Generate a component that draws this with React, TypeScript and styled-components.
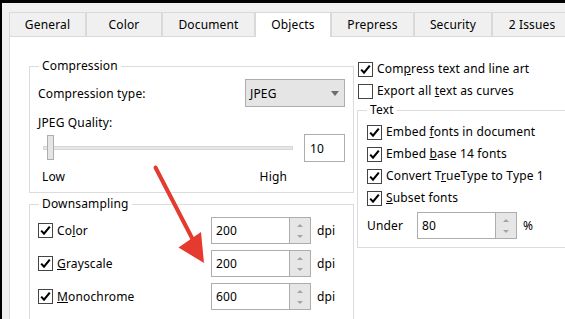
import React from "react";
import styled, { createGlobalStyle } from "styled-components";

const Global = createGlobalStyle`
  html, body { margin: 0; padding: 0; background: #000; }
  body {
    width: 565px; height: 319px; overflow: hidden;
    font-family: "Noto Sans", "Segoe UI", sans-serif;
    font-size: 12px; color: #000;
    letter-spacing: 0.15px;
  }
`;

const Page = styled.div`
  position: relative;
  width: 565px;
  height: 319px;
  overflow: hidden;
  box-sizing: border-box;
  padding: 3px 0 0 2px;
  background: #000;
`;

const Window = styled.div`
  display: flex;
  flex-direction: column;
  height: 316px;
  box-sizing: border-box;
  padding: 9px 0 0 7px;
  background: #f0f0f0;
`;

const TabBar = styled.div`
  display: flex;
  align-items: flex-start;
  height: 24px;
  flex: none;
`;

const Tab = styled.div<{ $w: number; $active?: boolean }>`
  box-sizing: border-box;
  flex: none;
  width: ${(p) => p.$w}px;
  height: ${(p) => (p.$active ? 25 : 24)}px;
  display: flex;
  align-items: center;
  justify-content: center;
  padding-bottom: ${(p) => (p.$active ? 1 : 0)}px;
  border: 1px solid #d9d9d9;
  border-bottom: none;
  background: ${(p) => (p.$active ? "#fff" : "#f0f0f0")};
  position: relative;
  z-index: ${(p) => (p.$active ? 1 : 0)};
  line-height: 16px;
`;

const Panel = styled.div`
  flex: 1;
  display: flex;
  gap: 3px;
  box-sizing: border-box;
  padding: 21px 0 0 19px;
  background: #fff;
  border-top: 1px solid #d9d9d9;
  border-left: 1px solid #d9d9d9;
`;

const LeftCol = styled.div`
  flex: none;
  width: 325px;
  display: flex;
  flex-direction: column;
`;

const RightCol = styled.div`
  flex: none;
  width: 222px;
  display: flex;
  flex-direction: column;
`;

const GroupBox = styled.fieldset<{ $mt?: number; $open?: boolean }>`
  margin: ${(p) => p.$mt ?? 0}px 0 0 0;
  padding: 0;
  min-width: 0;
  border: 1px solid #dcdcdc;
  ${(p) => (p.$open ? "border-bottom: none; flex: 1;" : "")}
`;

const Legend = styled.legend`
  padding: 0 3px;
  margin-left: 9px;
  line-height: 16px;
`;

const GroupBody = styled.div<{ $pad: string }>`
  display: flex;
  flex-direction: column;
  padding: ${(p) => p.$pad};
`;

const TypeRow = styled.div`
  display: flex;
  align-items: center;
  justify-content: space-between;
  height: 28px;
`;

const Text = styled.div<{ $mt?: number }>`
  line-height: 16px;
  margin-top: ${(p) => p.$mt ?? 0}px;
`;

const Dropdown = styled.div`
  box-sizing: border-box;
  width: 100px;
  height: 28px;
  display: flex;
  align-items: center;
  justify-content: space-between;
  padding: 0 5px 0 4px;
  border: 1px solid #adadad;
  background: #e5e5e5;
`;

const DropArrow = styled.span`
  width: 0;
  height: 0;
  border-left: 4.5px solid transparent;
  border-right: 4.5px solid transparent;
  border-top: 5px solid #6d6d6d;
`;

const SliderRow = styled.div`
  display: flex;
  align-items: center;
  gap: 6px;
  height: 28px;
  margin-top: 3px;
`;

const Slider = styled.div`
  position: relative;
  width: 260px;
  height: 28px;
  display: flex;
  align-items: center;
`;

const Track = styled.div`
  box-sizing: border-box;
  flex: 1;
  margin: 0 5px;
  height: 4px;
  border: 1px solid #d6d6d6;
  background: #e7e7e7;
`;

const Thumb = styled.div`
  position: absolute;
  left: 9px;
  top: 1px;
  box-sizing: border-box;
  width: 7px;
  height: 25px;
  border: 1px solid #adadad;
  background: #e5e5e5;
`;

const NumBox = styled.div<{ $w: number; $h: number }>`
  box-sizing: border-box;
  width: ${(p) => p.$w}px;
  height: ${(p) => p.$h}px;
  display: flex;
  align-items: center;
  padding-left: 5px;
  border: 1px solid #adadad;
  background: #fff;
`;

const RangeLabels = styled.div`
  width: 260px;
  box-sizing: border-box;
  display: flex;
  justify-content: space-between;
  padding: 0 11px 0 4px;
  margin-top: 7px;
  line-height: 16px;
`;

const DpiRow = styled.div<{ $mt?: number }>`
  display: flex;
  align-items: center;
  height: 27px;
  margin-top: ${(p) => p.$mt ?? 0}px;
`;

const CheckCell = styled.label<{ $w?: number }>`
  display: flex;
  align-items: center;
  gap: 4px;
  line-height: 16px;
  ${(p) => (p.$w ? `width: ${p.$w}px; flex: none;` : "")}
`;

const CheckRow = styled.label<{ $pl?: number }>`
  display: flex;
  align-items: center;
  gap: 4px;
  height: 22px;
  padding-left: ${(p) => p.$pl ?? 0}px;
  line-height: 16px;
`;

const Box = styled.span`
  box-sizing: border-box;
  flex: none;
  width: 15px;
  height: 15px;
  border: 1px solid #444;
  background: #fff;
  display: flex;
  align-items: center;
  justify-content: center;
`;

const Key = styled.span`
  text-decoration: underline;
`;

const Spin = styled.div`
  box-sizing: border-box;
  flex: none;
  width: 100px;
  height: 27px;
  display: flex;
  border: 1px solid #adadad;
  background: #fff;
`;

const SpinValue = styled.div`
  flex: 1;
  display: flex;
  align-items: center;
  padding-left: 4px;
`;

const SpinButtons = styled.div`
  width: 21px;
  flex: none;
  display: flex;
  flex-direction: column;
  justify-content: space-between;
  align-items: center;
  padding: 6px 0 5px;
  box-sizing: border-box;
  border-left: 1px solid #adadad;
  background: #e6e6e6;
`;

const ArrowUp = styled.span`
  width: 0;
  height: 0;
  border-left: 3px solid transparent;
  border-right: 3px solid transparent;
  border-bottom: 3px solid #a3a3a3;
`;

const ArrowDown = styled.span`
  width: 0;
  height: 0;
  border-left: 3px solid transparent;
  border-right: 3px solid transparent;
  border-top: 3px solid #a3a3a3;
`;

const Unit = styled.span`
  margin-left: 6px;
  line-height: 16px;
`;

const UnderRow = styled.div`
  display: flex;
  align-items: center;
  height: 27px;
  margin-top: 3px;
`;

const UnderLabel = styled.span`
  width: 50px;
  flex: none;
  line-height: 16px;
`;

const Overlay = styled.svg`
  position: absolute;
  left: 0;
  top: 0;
  pointer-events: none;
`;

const Check = ({ on = true }: { on?: boolean }) => (
  <Box>
    {on && (
      <svg width="11" height="11" viewBox="0 0 11 11">
        <path d="M1.2 5.6 L4 8.6 L9.8 1.6" fill="none" stroke="#000" strokeWidth="2.1" />
      </svg>
    )}
  </Box>
);

const SpinBox = ({ value }: { value: string }) => (
  <Spin>
    <SpinValue>{value}</SpinValue>
    <SpinButtons>
      <ArrowUp />
      <ArrowDown />
    </SpinButtons>
  </Spin>
);

const tabs: [string, number][] = [
  ["General", 77],
  ["Color", 76],
  ["Document", 93],
  ["Objects", 76],
  ["Prepress", 83],
  ["Security", 78],
  ["2 Issues", 80],
];

const dpiRows: { pre: string; key: string; post: string; value: string }[] = [
  { pre: "Co", key: "l", post: "or", value: "200" },
  { pre: "", key: "G", post: "rayscale", value: "200" },
  { pre: "", key: "M", post: "onochrome", value: "600" },
];

export default function App() {
  return (
    <Page>
      <Global />
      <Window>
        <TabBar>
          {tabs.map(([t, w]) => (
            <Tab key={t} $w={w} $active={t === "Objects"}>
              {t}
            </Tab>
          ))}
        </TabBar>
        <Panel>
          <LeftCol>
            <GroupBox>
              <Legend>Compression</Legend>
              <GroupBody $pad="5px 8px 7px 8px">
                <TypeRow>
                  <span>Compression type:</span>
                  <Dropdown>
                    <span>JPEG</span>
                    <DropArrow />
                  </Dropdown>
                </TypeRow>
                <Text $mt={8}>JPEG Quality:</Text>
                <SliderRow>
                  <Slider>
                    <Track />
                    <Thumb />
                  </Slider>
                  <NumBox $w={41} $h={28}>10</NumBox>
                </SliderRow>
                <RangeLabels>
                  <span>Low</span>
                  <span>High</span>
                </RangeLabels>
              </GroupBody>
            </GroupBox>
            <GroupBox $mt={3} $open>
              <Legend>Downsampling</Legend>
              <GroupBody $pad="5px 8px 0 8px">
                {dpiRows.map((r, i) => (
                  <DpiRow key={i} $mt={i ? 6 : 0}>
                    <CheckCell $w={173}>
                      <Check />
                      <span>
                        {r.pre}
                        <Key>{r.key}</Key>
                        {r.post}
                      </span>
                    </CheckCell>
                    <SpinBox value={r.value} />
                    <Unit>dpi</Unit>
                  </DpiRow>
                ))}
              </GroupBody>
            </GroupBox>
          </LeftCol>
          <RightCol>
            <CheckRow $pl={1}>
              <Check />
              <span>
                Com<Key>p</Key>ress text and line art
              </span>
            </CheckRow>
            <CheckRow $pl={1}>
              <Check on={false} />
              <span>
                Export all <Key>t</Key>ext as curves
              </span>
            </CheckRow>
            <GroupBox>
              <Legend>Text</Legend>
              <GroupBody $pad="3px 0 8px 9px">
                <CheckRow>
                  <Check />
                  <span>
                    Embed <Key>f</Key>onts in document
                  </span>
                </CheckRow>
                <CheckRow>
                  <Check />
                  <span>
                    Embed <Key>b</Key>ase 14 fonts
                  </span>
                </CheckRow>
                <CheckRow>
                  <Check />
                  <span>
                    Convert T<Key>r</Key>ueType to Type 1
                  </span>
                </CheckRow>
                <CheckRow>
                  <Check />
                  <span>
                    <Key>S</Key>ubset fonts
                  </span>
                </CheckRow>
                <UnderRow>
                  <UnderLabel>Under</UnderLabel>
                  <SpinBox value="80" />
                  <Unit>%</Unit>
                </UnderRow>
              </GroupBody>
            </GroupBox>
          </RightCol>
        </Panel>
      </Window>
      <Overlay width="565" height="319" viewBox="0 0 565 319">
        <line x1="155.5" y1="167.5" x2="192" y2="238" stroke="#e53a2f" strokeWidth="4" strokeLinecap="round" />
        <polygon points="204,263 178.5,247.5 201,232" fill="#e53a2f" />
      </Overlay>
    </Page>
  );
}
